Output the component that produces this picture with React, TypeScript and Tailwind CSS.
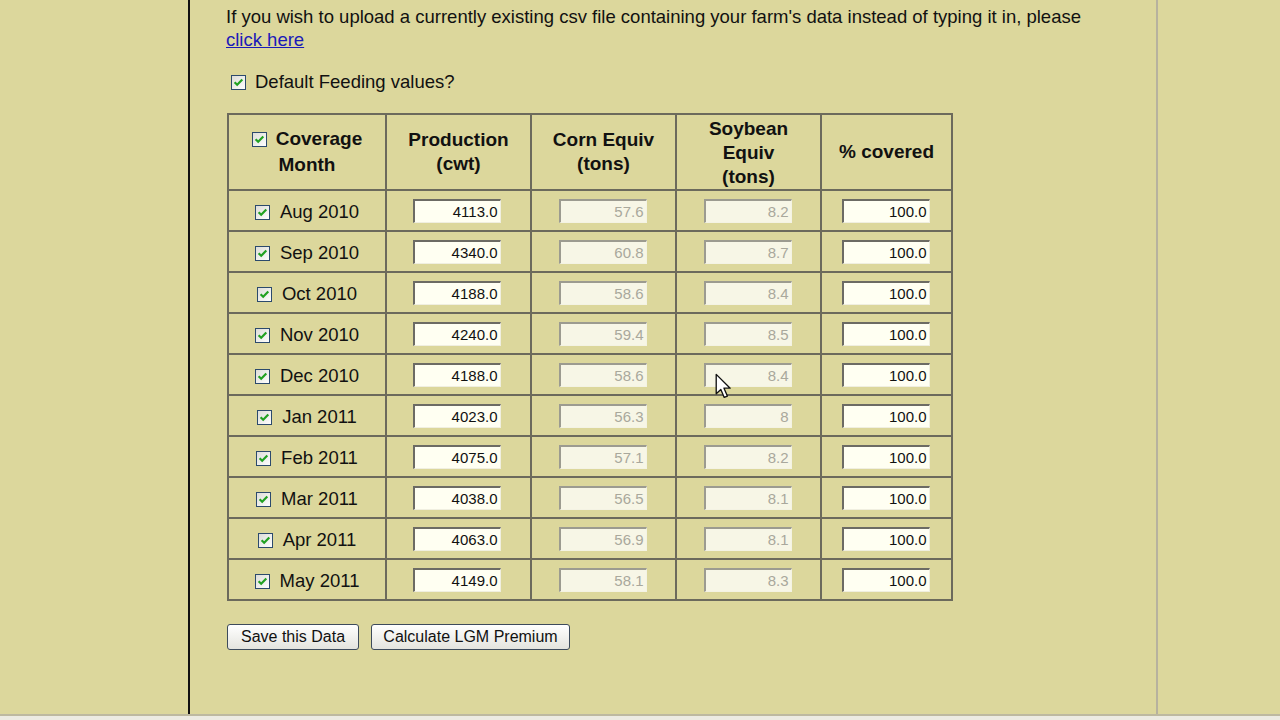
import React from "react";

const rows = [
  ["Aug 2010", "4113.0", "57.6", "8.2"],
  ["Sep 2010", "4340.0", "60.8", "8.7"],
  ["Oct 2010", "4188.0", "58.6", "8.4"],
  ["Nov 2010", "4240.0", "59.4", "8.5"],
  ["Dec 2010", "4188.0", "58.6", "8.4"],
  ["Jan 2011", "4023.0", "56.3", "8"],
  ["Feb 2011", "4075.0", "57.1", "8.2"],
  ["Mar 2011", "4038.0", "56.5", "8.1"],
  ["Apr 2011", "4063.0", "56.9", "8.1"],
  ["May 2011", "4149.0", "58.1", "8.3"],
];

function Check() {
  return (
    <svg width="15" height="15" viewBox="0 0 15 15" className="inline-block shrink-0">
      <defs>
        <linearGradient id="cbg" x1="0" y1="0" x2="1" y2="1">
          <stop offset="0" stopColor="#dcdcd6" />
          <stop offset="1" stopColor="#ffffff" />
        </linearGradient>
      </defs>
      <rect x="0.5" y="0.5" width="14" height="14" fill="url(#cbg)" stroke="#2c4a6c" />
      <path d="M3.6 7.2 L6.2 9.8 L11.3 4.6" fill="none" stroke="#21a121" strokeWidth="2.2" />
    </svg>
  );
}

function Field({ value, disabled }: { value: string; disabled?: boolean }) {
  return (
    <div
      className={
        "w-[88px] h-[24px] border-t-2 border-l-2 border-r border-b flex items-center justify-end pr-[2px] text-[15px] leading-none " +
        (disabled
          ? "bg-[#f7f6e6] text-[#a9a89c] border-t-[#9c9b90] border-l-[#9c9b90] border-r-[#f4f3e4] border-b-[#f4f3e4]"
          : "bg-[#fffff2] text-[#111] border-t-[#6c6b64] border-l-[#6c6b64] border-r-[#f0efe0] border-b-[#f0efe0]")
      }
    >
      {value}
    </div>
  );
}

export default function App() {
  const font = { fontFamily: '"Liberation Sans", Arial, sans-serif' };
  return (
    <div className="w-[1280px] h-[720px] flex flex-col bg-[#dcd79c] text-[#111] overflow-hidden" style={font}>
      <div className="flex h-[714px]">
        <div className="w-[188px] shrink-0" />
        <div className="w-[970px] shrink-0 border-l-2 border-l-[#111] border-r-2 border-r-[#b7b29e] pl-[36px] pt-[5px] relative">
          <p className="text-[18.5px] leading-[23px]">
            If you wish to upload a currently existing csv file containing your farm's data instead of typing it in, please
            <br />
            <a href="#" className="text-[#1a1ab8] underline">click here</a>
          </p>
          <div className="flex items-center gap-[9px] mt-[19px] ml-[5px] h-[24px] text-[18.5px]">
            <Check />
            <span>Default Feeding values?</span>
          </div>
          <div className="mt-[19px] ml-[1px] w-[726px] border-2 border-[#6c6a5c]">
            <div className="flex h-[76px] border-b-2 border-[#6c6a5c] font-bold text-[19px] leading-[24px] text-center">
              <div className="w-[158px] border-r-2 border-[#6c6a5c] flex items-center justify-center">
                <div>
                  <span className="inline-flex items-center gap-[9px]">
                    <Check />
                    <span>Coverage</span>
                  </span>
                  <br />
                  Month
                </div>
              </div>
              <div className="w-[145px] border-r-2 border-[#6c6a5c] flex items-center justify-center">
                <div>Production<br />(cwt)</div>
              </div>
              <div className="w-[145px] border-r-2 border-[#6c6a5c] flex items-center justify-center">
                <div>Corn Equiv<br />(tons)</div>
              </div>
              <div className="w-[145px] border-r-2 border-[#6c6a5c] flex items-center justify-center pt-[1px]">
                <div>Soybean<br />Equiv<br />(tons)</div>
              </div>
              <div className="flex-1 flex items-center justify-center">
                <div>% covered</div>
              </div>
            </div>
            {rows.map((r, i) => (
              <div
                key={r[0]}
                className={
                  "flex " + (i === rows.length - 1 ? "h-[39px]" : "h-[41px] border-b-2 border-[#6c6a5c]")
                }
              >
                <div className="w-[158px] border-r-2 border-[#6c6a5c] flex items-center justify-center gap-[10px] text-[18.5px] pt-[3px]">
                  <Check />
                  <span>{r[0]}</span>
                </div>
                <div className="w-[145px] border-r-2 border-[#6c6a5c] flex items-center justify-center pr-[4px]">
                  <Field value={r[1]} />
                </div>
                <div className="w-[145px] border-r-2 border-[#6c6a5c] flex items-center justify-center pr-[2px]">
                  <Field value={r[2]} disabled />
                </div>
                <div className="w-[145px] border-r-2 border-[#6c6a5c] flex items-center justify-center pr-[2px]">
                  <Field value={r[3]} disabled />
                </div>
                <div className="flex-1 flex items-center justify-center pr-[2px]">
                  <Field value="100.0" />
                </div>
              </div>
            ))}
          </div>
          <div className="flex gap-[12px] mt-[23px] ml-[1px]">
            <button className="h-[26px] w-[132px] rounded-[3px] border border-[#3d4b5c] bg-gradient-to-b from-[#ffffff] to-[#e4e4de] text-[16px] leading-none text-[#111]">
              Save this Data
            </button>
            <button className="h-[26px] w-[199px] rounded-[3px] border border-[#3d4b5c] bg-gradient-to-b from-[#ffffff] to-[#e4e4de] text-[16px] leading-none text-[#111]">
              Calculate LGM Premium
            </button>
          </div>
          <svg
            width="17"
            height="27"
            viewBox="0 0 14 22"
            className="absolute left-[525px] top-[373px]"
          >
            <path
              d="M1 1 L1 17 L4.8 13.4 L7.6 20 L10.2 18.9 L7.4 12.4 L12.5 12.4 Z"
              fill="#ffffff"
              stroke="#111"
              strokeWidth="1.1"
              strokeLinejoin="round"
            />
          </svg>
        </div>
        <div className="flex-1" />
      </div>
      <div className="flex-1 border-t-2 border-[#bdb9a0] bg-[#ecebe2]" />
    </div>
  );
}
